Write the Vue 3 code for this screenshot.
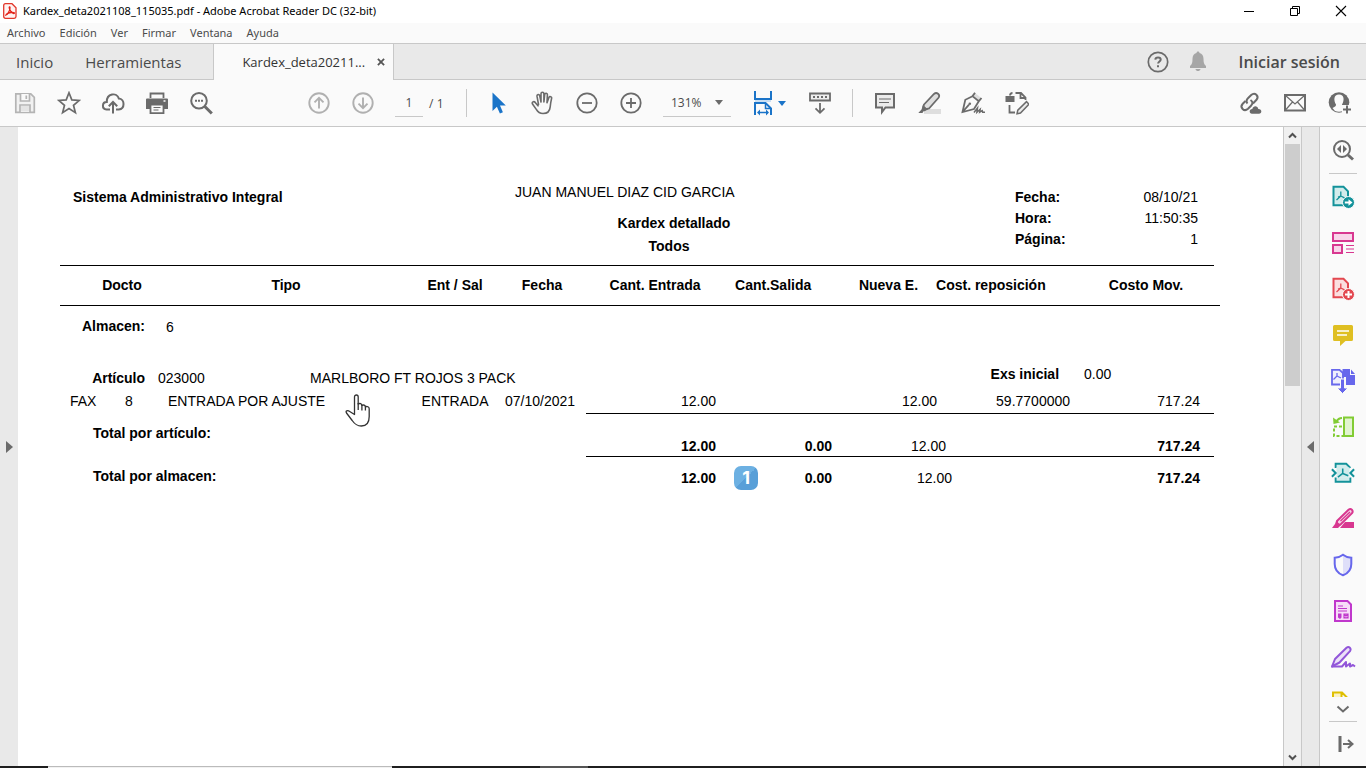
<script setup>
import { ref } from 'vue'

const page = ref('1')
const zoom = ref('131%')

const menus = ['Archivo', 'Edición', 'Ver', 'Firmar', 'Ventana', 'Ayuda']

const info = [
    { label: 'Fecha:', value: '08/10/21' },
    { label: 'Hora:', value: '11:50:35' },
    { label: 'Página:', value: '1' },
]

const movements = [
    { type: 'FAX', number: '8', name: 'ENTRADA POR AJUSTE', move: 'ENTRADA', date: '07/10/2021', input: '12.00', output: '', stock: '12.00', cost: '59.7700000', total: '717.24' },
]
</script>

<template>
    <div class="window">
        <header class="title_bar">
            <svg class="app_icon" width="14" height="16" viewBox="0 0 14 16">
                <path d="M2.500 .7h6.500l4 4v8.800q0 1.800-1.800 1.800H2.500Q.7 15.300.7 13.500v-11Q.7.7 2.500.7z" fill="#fff3f2" stroke="#e2372b" stroke-width="1.300" />
                <path d="M3 12c1.500-.6 4-4 4-7.300 0-1.400-1.100-1-.7.500.5 2.200 2.600 5 4.500 5.300 1.300 0 .4-1.400-1.700-1.200C6.800 9.500 4 10.500 3.200 11.500z" fill="none" stroke="#e2231a" stroke-width="1.300" />
            </svg>
            <span class="title">Kardex_deta2021108_115035.pdf - Adobe Acrobat Reader DC (32-bit)</span>
            <button class="win_btn" aria-label="Minimizar">
                <svg width="12" height="12" viewBox="0 0 12 12"><path d="M1 6.500h10" stroke="#000" /></svg>
            </button>
            <button class="win_btn" aria-label="Restaurar">
                <svg width="12" height="12" viewBox="0 0 12 12" fill="none" stroke="#000"><path d="M1.500 3.500h7v7h-7zM3.500 3.500v-2h7v7h-2" /></svg>
            </button>
            <button class="win_btn" aria-label="Cerrar">
                <svg width="12" height="12" viewBox="0 0 12 12" stroke="#000" stroke-width="1.100"><path d="M1 1l10 10M11 1L1 11" /></svg>
            </button>
        </header>

        <nav class="menu_bar">
            <button v-for="menu in menus" :key="menu">{{ menu }}</button>
        </nav>

        <div class="tabs">
            <button class="tab">Inicio</button>
            <button class="tab">Herramientas</button>
            <div class="tab_active">
                <span>Kardex_deta20211...</span>
                <button aria-label="Cerrar pestaña">
                    <svg width="8" height="8" viewBox="0 0 9 9" stroke="#555" stroke-width="2"><path d="M1 1l7 7M8 1L1 8" /></svg>
                </button>
            </div>
            <div class="session">
                <button aria-label="Ayuda">
                    <svg width="22" height="22" viewBox="0 0 22 22" fill="none" stroke="#6b6b6b">
                        <circle cx="11" cy="11" r="9.700" stroke-width="1.700" />
                        <path d="M8.300 8.600c.2-2.900 5.400-2.900 5.400 0 0 1.900-2.600 1.900-2.600 4" stroke-width="2" />
                        <path d="M11 14.200v2" stroke-width="2" />
                    </svg>
                </button>
                <button aria-label="Notificaciones">
                    <svg width="18" height="21" viewBox="0 0 18 21" fill="#a6a6a6">
                        <path d="M9 .5c1 0 1.500.6 1.500 1.600 2.700.8 4 2.900 4 5.700 0 4 .5 5.700 2.500 7.200v2H1v-2c2-1.500 2.500-3.200 2.500-7.200 0-2.800 1.300-4.900 4-5.700C7.500 1.100 8 .5 9 .5zM6.500 18h5c-.5 2.700-4.500 2.700-5 0z" />
                    </svg>
                </button>
                <button class="login">Iniciar sesión</button>
            </div>
        </div>

        <div class="toolbar">
            <div class="tools files">
                <button aria-label="Guardar">
                    <svg width="24" height="24" viewBox="0 0 24 24" fill="none" stroke="#b4b4b4" stroke-width="1.700">
                        <path d="M2.800 2.800h15l3.500 3.500v15H2.800z" fill="#f1f1f1" />
                        <path d="M7.500 3v7h9V3M13.300 4.500V8M7 21v-7h10v7" fill="#fafafa" />
                        <path d="M8 15h8v5.500H8z" fill="#e4e4e4" stroke="none" />
                    </svg>
                </button>
                <button aria-label="Favoritos">
                    <svg width="24" height="24" viewBox="0 0 24 24" fill="none" stroke="#6b6b6b" stroke-width="1.700">
                        <path d="M12 1.800l2.800 7.100 7.500.5-5.800 4.900 1.900 7.400-6.400-4.100-6.400 4.100 1.900-7.400L1.700 9.400l7.500-.5z" />
                    </svg>
                </button>
                <button aria-label="Subir a la nube">
                    <svg width="24" height="24" viewBox="0 0 24 24" fill="none" stroke="#6b6b6b" stroke-width="2">
                        <path d="M9 18.500H5.500c-5-.5-4.600-7.600.3-7.500C5.500 2.500 16 .8 17.800 7.600c6.300.4 6.300 10.300 0 10.900H15" />
                        <path d="M12 22.500V11.500M7.800 15.300L12 11l4.200 4.300" />
                    </svg>
                </button>
                <button aria-label="Imprimir">
                    <svg width="24" height="24" viewBox="0 0 24 24">
                        <path d="M5.500 7V2.500h13V7" fill="none" stroke="#6b6b6b" stroke-width="1.800" />
                        <path d="M2 7.500h20q1 0 1 1v9.500h-4v-4.500H5V18H1V8.500q0-1 1-1z" fill="#6b6b6b" />
                        <path d="M5.500 13.500h13v8.600h-13z" fill="#fafafa" stroke="#6b6b6b" stroke-width="1.800" />
                        <path d="M8.500 16.500h7M8.500 19h5" stroke="#6b6b6b" stroke-width="1.200" />
                        <path d="M18.500 10h2" stroke="#fff" stroke-width="1.500" />
                    </svg>
                </button>
                <button aria-label="Buscar">
                    <svg width="24" height="24" viewBox="0 0 24 24" fill="none" stroke="#6b6b6b">
                        <circle cx="10" cy="9.700" r="7.800" stroke-width="2" />
                        <path d="M15.800 15.500l7 7" stroke-width="3" />
                        <path d="M6 9.800h2M9 9.800h2M12 9.800h2" stroke-width="2" />
                    </svg>
                </button>
            </div>
            <div class="tools">
                <button aria-label="Página anterior">
                    <svg width="24" height="24" viewBox="0 0 24 24" fill="none" stroke="#b0b0b0" stroke-width="1.900">
                        <circle cx="12" cy="12" r="9.700" /><path d="M12 17.500V7M7.500 11.300L12 6.800l4.500 4.500" />
                    </svg>
                </button>
                <button aria-label="Página siguiente">
                    <svg width="24" height="24" viewBox="0 0 24 24" fill="none" stroke="#b0b0b0" stroke-width="1.900">
                        <circle cx="12" cy="12" r="9.700" /><path d="M12 6.500V17M7.500 12.700l4.500 4.500 4.500-4.500" />
                    </svg>
                </button>
            </div>
            <label class="page_box"><input v-model="page" type="text" aria-label="Página"> / 1</label>
            <span class="divider"></span>
            <div class="tools">
                <button aria-label="Seleccionar">
                    <svg width="24" height="24" viewBox="0 0 24 24"><path d="M5.500 1.500v18.500l4.400-4.300 3 6.800 3-1.300-2.900-6.700h5.800z" fill="#1b74c8" /></svg>
                </button>
                <button aria-label="Mano">
                    <svg width="24" height="24" viewBox="0 0 24 24" fill="none" stroke="#6b6b6b" stroke-width="1.600" stroke-linecap="round" stroke-linejoin="round">
                        <path d="M7.500 13.500L6 5.200c-.2-1.900 2.200-2.300 2.700-.5L10 11V2.800c0-2 2.900-2 2.900 0V11l.8-7.500c.3-1.800 2.800-1.500 2.700.3L16 11.800l1.900-5.300c.7-1.700 3.100-.9 2.700.9-.7 3-1.100 5.500-1.400 8.400-.4 4.500-2.600 6.700-7.200 6.700-3.600 0-5.300-1.600-6.700-4.100L1.500 13c-.9-1.800 1.300-3.200 2.700-1.600l2.800 3.400" />
                    </svg>
                </button>
                <button aria-label="Reducir">
                    <svg width="24" height="24" viewBox="0 0 24 24" fill="none" stroke="#6b6b6b" stroke-width="1.800">
                        <circle cx="12" cy="12" r="9.700" /><path d="M7 12h10" />
                    </svg>
                </button>
                <button aria-label="Ampliar">
                    <svg width="24" height="24" viewBox="0 0 24 24" fill="none" stroke="#6b6b6b" stroke-width="1.800">
                        <circle cx="12" cy="12" r="9.700" /><path d="M7 12h10M12 7v10" />
                    </svg>
                </button>
            </div>
            <label class="zoom_box">
                <select v-model="zoom" aria-label="Zoom">
                    <option>100%</option>
                    <option>131%</option>
                    <option>150%</option>
                </select>
                <svg width="8" height="5" viewBox="0 0 8 5"><path d="M0 0h8L4 5z" fill="#6b6b6b" /></svg>
            </label>
            <div class="tools">
                <button class="fit" aria-label="Ajustar ancho">
                    <svg width="20" height="26" viewBox="0 0 20 26" fill="none" stroke="#1b74c8" stroke-width="2">
                        <path d="M2 1v8h16V1" fill="#fafafa" />
                        <path d="M2 25V13h10.500L18 18.500V25" />
                        <path d="M12.500 13v5.500H18" stroke-width="1.500" />
                        <path d="M2 11h16" stroke="#c9dff3" />
                        <path d="M6 22.500h9" stroke-width="1.500" />
                        <path d="M7 19.500l-3 3 3 3zM13 19.500l3 3-3 3z" fill="#1b74c8" stroke="none" />
                    </svg>
                    <svg width="8" height="5" viewBox="0 0 8 5"><path d="M0 0h8L4 5z" fill="#1b74c8" /></svg>
                </button>
                <button aria-label="Mostrar barra">
                    <svg width="24" height="24" viewBox="0 0 24 24" fill="none" stroke="#6b6b6b" stroke-width="1.800">
                        <path d="M2 2.500h20v7H2z" fill="#eee" />
                        <path d="M5 6h2M9 6h2M13 6h2M17 6h2" />
                        <path d="M12 12v9.500M7.500 17.300l4.500 4.500 4.500-4.500" />
                    </svg>
                </button>
            </div>
            <span class="divider short"></span>
            <div class="tools">
                <button aria-label="Comentar">
                    <svg width="24" height="24" viewBox="0 0 24 24" fill="none" stroke="#6b6b6b">
                        <path d="M3 3h18v13.500h-8.500L9 21v-4.500H3z" fill="#ececec" stroke-width="2" />
                        <path d="M6 8h12M6 11.500h10" stroke-width="1.200" />
                    </svg>
                </button>
                <button aria-label="Resaltar">
                    <svg width="24" height="24" viewBox="0 0 24 24">
                        <path d="M7 18h17v5H7z" fill="#dedede" />
                        <path d="M7 13.500L17 3c2.700-2.500 6.600.7 4.500 3.800L12 17.500l-3.500.8-2.300-2z" fill="#dedede" stroke="#6b6b6b" stroke-width="1.800" />
                        <path d="M6 14l5 4.500-3.500 1.700H6.500L5.500 22H1.300l3.200-3.600z" fill="#6b6b6b" />
                    </svg>
                </button>
                <button aria-label="Firmar">
                    <svg width="24" height="24" viewBox="0 0 24 24" fill="none" stroke="#6b6b6b" stroke-width="1.800">
                        <path d="M14 2l7 5.500-2.500 3-6.500-6z" fill="#dedede" stroke="none" />
                        <path d="M14 1.800l-2.500 3.400 6.300 5L20.500 7M11.500 5.200L4.300 8.800 1.500 21l11.500-3 4.800-7.800M2 20.500l6-6.800" />
                        <circle cx="8.800" cy="12.700" r="1.300" fill="#6b6b6b" stroke="none" />
                        <path d="M13 21.500l3.500-4.500-.6 4.200 3.300-3-.5 3 2.500-1.500.5 1.500H24" stroke-width="1.500" />
                    </svg>
                </button>
                <button aria-label="Editar">
                    <svg width="24" height="24" viewBox="0 0 24 24" fill="none" stroke="#6b6b6b" stroke-width="1.800">
                        <path d="M5 4.500q0-2.500 2.500-2.500M10.500 2h5.500l4.500 4.500V9M15.500 2v5h5M4.500 14v7.500H10" />
                        <path d="M.5 5h9v6h-9z" fill="#6b6b6b" stroke="none" />
                        <path d="M12 22.800l.8-3.700 8.700-8.500 2.400 2.600-8.400 8.800z" fill="#ececec" stroke-width="1.500" />
                    </svg>
                </button>
            </div>
            <div class="tools share">
                <button aria-label="Compartir vínculo">
                    <svg width="24" height="24" viewBox="0 0 24 24" fill="none" stroke="#6b6b6b" stroke-width="2">
                        <path d="M9.500 12.500c-2-2.200-.8-4 .7-5.500l3-3c3.700-3.300 8.300 1 5.300 4.800L15 12.500" />
                        <path d="M12.500 9c2.700 1.700 2.300 4 .5 5.800l-3 3c-4 3.600-8.600-1.500-5.300-5L7.500 10" />
                        <path d="M14 22.700c-3.300-.2-3-4.700.3-4.700 1-3.800 5.500-3.300 6 0 3.800-.2 4 4.700.7 4.700z" fill="#6b6b6b" stroke="none" />
                    </svg>
                </button>
                <button aria-label="Correo">
                    <svg width="24" height="24" viewBox="0 0 24 24" fill="none" stroke="#6b6b6b">
                        <path d="M2 4h20v15.500H2z" stroke-width="2" />
                        <path d="M2.500 4.500L12 13l9.500-8.500M2.500 19l7-8M21.500 19l-7-8" stroke-width="1.200" />
                    </svg>
                </button>
                <button aria-label="Agregar persona">
                    <svg width="24" height="24" viewBox="0 0 24 24">
                        <circle cx="11" cy="11.500" r="10.300" fill="#6b6b6b" />
                        <path d="M11 3.500c5.500 0 5.500 6 3 10 0 1.500.5 2 3.500 3.500L15 20c-2.500 1-5.500 1-8 0l-2.500-3c3-1.500 3.500-2 3.500-3.500-2.500-4-2.500-10 3-10z" fill="#fafafa" />
                        <path d="M14 14h10v10H14z" fill="#fafafa" />
                        <path d="M19 14.500v8M15 18.500h8" stroke="#6b6b6b" stroke-width="2" />
                    </svg>
                </button>
            </div>
        </div>

        <main class="content">
            <button class="side_toggle left" aria-label="Mostrar panel izquierdo">
                <svg width="7" height="12" viewBox="0 0 7 12"><path d="M0 0l7 6-7 6z" fill="#6b6b6b" /></svg>
            </button>

            <article class="sheet">
                <div class="report_head">
                    <b class="system">Sistema Administrativo Integral</b>
                    <div class="report_title">
                        <p>JUAN MANUEL DIAZ CID GARCIA</p>
                        <h1>Kardex detallado</h1>
                        <h2>Todos</h2>
                    </div>
                    <dl>
                        <div v-for="item in info" :key="item.label">
                            <dt>{{ item.label }}</dt>
                            <dd>{{ item.value }}</dd>
                        </div>
                    </dl>
                </div>

                <table>
                    <colgroup>
                        <col class="w_type"><col class="w_number"><col class="w_code"><col class="w_name">
                        <col class="w_move"><col class="w_date"><col class="w_input"><col class="w_output">
                        <col class="w_stock"><col class="w_gap"><col class="w_cost"><col class="w_total"><col class="w_end">
                    </colgroup>
                    <thead>
                        <tr>
                            <th colspan="2" class="docto">Docto</th>
                            <th colspan="2" class="tipo">Tipo</th>
                            <th>Ent / Sal</th>
                            <th>Fecha</th>
                            <th>Cant. Entrada</th>
                            <th class="salida">Cant.Salida</th>
                            <th class="num">Nueva E.</th>
                            <th colspan="2" class="reposicion">Cost. reposición</th>
                            <th>Costo Mov.</th>
                            <td class="end"></td>
                        </tr>
                    </thead>
                    <tbody>
                        <tr class="almacen">
                            <th colspan="2" class="label">Almacen:</th>
                            <td colspan="11" class="store">6</td>
                        </tr>
                        <tr class="articulo">
                            <th colspan="2" class="label">Artículo</th>
                            <td>023000</td>
                            <td colspan="6">MARLBORO FT ROJOS 3 PACK</td>
                            <th colspan="2" class="initial">Exs inicial</th>
                            <td class="initial_value">0.00</td>
                            <td></td>
                        </tr>
                        <tr v-for="m in movements" :key="m.number" class="movement">
                            <td class="type">{{ m.type }}</td>
                            <td>{{ m.number }}</td>
                            <td colspan="2" class="wide">
                                {{ m.name }}
                                <svg class="hand" width="26" height="34" viewBox="0 0 26 34" fill="#fff" stroke="#333" stroke-width="1.300" stroke-linejoin="round">
                                    <path d="M9.500 20.500V3c0-2.700 3.700-2.700 3.700 0v7c1.600-1 3.700-.4 3.700 1.400 1.500-.9 3.500-.2 3.500 1.400 1.700-.8 3.800.1 3.800 2v7.700c0 5.700-2.700 9.500-7.800 9.500-4.900 0-7-2.200-9.200-5.500L1.500 19c-1-1.600.2-3 2-2.200z" />
                                    <path d="M13.200 9v7M16.900 11v5.500M20.400 12.500v4" />
                                </svg>
                            </td>
                            <td class="center">{{ m.move }}</td>
                            <td class="date">{{ m.date }}</td>
                            <td class="num">{{ m.input }}</td>
                            <td class="num">{{ m.output }}</td>
                            <td colspan="2" class="num stock">{{ m.stock }}</td>
                            <td class="num">{{ m.cost }}</td>
                            <td class="num total">{{ m.total }}</td>
                            <td></td>
                        </tr>
                        <tr class="sum by_item">
                            <th colspan="6">Total por artículo:</th>
                            <td class="num strong">12.00</td>
                            <td class="num strong">0.00</td>
                            <td colspan="2" class="num stock_item">12.00</td>
                            <td class="num"></td>
                            <td class="num strong total">717.24</td>
                            <td></td>
                        </tr>
                        <tr class="sum by_store">
                            <th colspan="6">Total por almacen:</th>
                            <td class="num strong">12.00</td>
                            <td class="num strong"><span class="badge">1</span>0.00</td>
                            <td colspan="2" class="num">12.00</td>
                            <td class="num"></td>
                            <td class="num strong total">717.24</td>
                            <td></td>
                        </tr>
                    </tbody>
                </table>
            </article>

            <div class="scrollbar">
                <button aria-label="Subir">
                    <svg width="9" height="7" viewBox="0 0 9 7" fill="none" stroke="#505050" stroke-width="2"><path d="M1 5.500L4.500 2 8 5.500" /></svg>
                </button>
                <div class="track"><div class="thumb"></div></div>
                <button aria-label="Bajar">
                    <svg width="9" height="7" viewBox="0 0 9 7" fill="none" stroke="#505050" stroke-width="2"><path d="M1 1.500L4.500 5 8 1.500" /></svg>
                </button>
            </div>

            <button class="side_toggle right" aria-label="Ocultar panel derecho">
                <svg width="7" height="12" viewBox="0 0 7 12"><path d="M7 0L0 6l7 6z" fill="#6b6b6b" /></svg>
            </button>

            <aside class="panel">
                <button aria-label="Buscar herramientas">
                    <svg width="24" height="24" viewBox="0 0 24 24" fill="none" stroke="#6b6b6b">
                        <circle cx="11" cy="11" r="8" stroke-width="2" />
                        <path d="M17 17l5 4.500" stroke-width="3" />
                        <path d="M10 7v8l-4-4zM12 7v8l4-4z" fill="#6b6b6b" stroke="none" />
                    </svg>
                </button>
                <hr>
                <div class="panel_list">
                    <button aria-label="Exportar PDF">
                        <svg width="24" height="24" viewBox="0 0 24 24" fill="none" stroke="#13929a">
                            <path d="M2.500 1.800h10L17 6.300v13.900H2.500z" fill="#d2ecec" stroke-width="2" />
                            <path d="M5.500 15l4.300-4V6.500M9.800 11l4.700 2.300M9.800 11L7 12" stroke-width="1.300" />
                            <circle cx="17.500" cy="17.500" r="6" fill="#13929a" stroke="#fafafa" />
                            <path d="M13.800 17.500h5" stroke="#fff" stroke-width="2" /><path d="M17.500 14.200l4 3.300-4 3.300z" fill="#fff" stroke="none" />
                        </svg>
                    </button>
                    <button aria-label="Organizar páginas">
                        <svg width="24" height="24" viewBox="0 0 24 24" fill="#f8d5ea" stroke="#d83790" stroke-width="2">
                            <path d="M2 2h20v8H2zM2 14h9v8H2z" />
                            <path d="M15 14.500h8M15 18h8M15 21.500h8" stroke-width="1.200" />
                        </svg>
                    </button>
                    <button aria-label="Crear PDF">
                        <svg width="24" height="24" viewBox="0 0 24 24" fill="none" stroke="#e34850">
                            <path d="M2.500 1.800h10L17 6.300v13.900H2.500z" fill="#fbdedf" stroke-width="2" />
                            <path d="M5.500 15l4.300-4V6.500M9.800 11l4.700 2.300M9.800 11L7 12" stroke-width="1.300" />
                            <circle cx="17.500" cy="17.500" r="6" fill="#e34850" stroke="#fafafa" />
                            <path d="M14 17.500h7M17.500 14v7" stroke="#fff" stroke-width="2" />
                        </svg>
                    </button>
                    <button aria-label="Comentar">
                        <svg width="24" height="24" viewBox="0 0 24 24">
                            <path d="M3.500 2h17q1.500 0 1.500 1.500v13q0 1.500-1.500 1.500h-6L9 23v-5H3.500Q2 18 2 16.500v-13Q2 2 3.500 2z" fill="#dfbf22" />
                            <path d="M6 8h12M6 12h10" stroke="#fff" stroke-width="1.500" />
                        </svg>
                    </button>
                    <button aria-label="Combinar archivos">
                        <svg width="26" height="26" viewBox="0 0 26 26" fill="none" stroke="#6767ec">
                            <path d="M2 1.800h7.500L13 5v11.500H2z" fill="#eeeefd" stroke-width="1.800" />
                            <path d="M3.500 11.500L7 8V5M7 8l4 2" stroke-width="1.300" />
                            <path d="M12.500 1H20v6h5v10h-9V9h-3.500zM21 1.500L25 6h-4z" fill="#6767ec" stroke="none" />
                            <path d="M10.500 11h4v9H18l-5.500 5.500L7 20h3.500z" fill="#6767ec" stroke="#fafafa" />
                        </svg>
                    </button>
                    <button aria-label="Comprimir páginas">
                        <svg width="24" height="24" viewBox="0 0 24 24" fill="none" stroke="#82cc34" stroke-width="2">
                            <path d="M13 2.500h9V21h-9z" fill="#e2f4d0" />
                            <path d="M11 11.500H3V21h9" stroke-dasharray="3 2" />
                            <path d="M11 3c-3 0-4.500 1.500-6 4" /><path d="M2 2.500L2.500 9 9 7.500z" fill="#82cc34" stroke="none" />
                        </svg>
                    </button>
                    <button aria-label="Optimizar PDF">
                        <svg width="24" height="24" viewBox="0 0 26 24" fill="none" stroke="#13929a">
                            <path d="M5 6.500V2h11.500L21 6.500M21 17v4.500H5V17" fill="#d2ecec" stroke-width="2" />
                            <path d="M6 6h14v11H6z" fill="#d2ecec" stroke="none" />
                            <path d="M7.500 16.500l5.200-4V7M12.700 12.500l6 2.500" stroke-width="1.700" />
                            <path d="M1 8l4 4-4 4M25 8l-4 4 4 4" stroke-width="2.200" />
                        </svg>
                    </button>
                    <button aria-label="Censurar">
                        <svg width="24" height="24" viewBox="0 0 24 24" fill="#d83790">
                            <path d="M14 15h9v6H9z" />
                            <path d="M6 14L17.500 2.800c2.500-2 5.300.8 3.500 3.400L9.500 17.500 6 18z" fill="#f5d5e7" stroke="#d83790" stroke-width="2" />
                            <path d="M9.500 14L19 5" stroke="#d83790" stroke-width="1.300" />
                            <path d="M5 14l5 4-3 3H1l3-4z" />
                        </svg>
                    </button>
                    <button aria-label="Proteger">
                        <svg width="24" height="24" viewBox="0 0 24 24">
                            <path d="M12 2v20c5-2 8.500-6.500 8.500-11V5C17 5 14 4 12 2z" fill="#dfdff9" />
                            <path d="M12 1.800c2.500 2 5 2.800 8.300 3V11c0 5.500-3.500 9.500-8.300 11.300C7.200 20.500 3.700 16.500 3.700 11V4.800C7 4.600 9.500 3.800 12 1.800z" fill="none" stroke="#6767ec" stroke-width="2" />
                        </svg>
                    </button>
                    <button aria-label="Preparar formulario">
                        <svg width="24" height="24" viewBox="0 0 24 24" fill="none" stroke="#c038cc">
                            <path d="M4 2h12.500L20 5.500V22H4z" fill="#f7dcf8" stroke-width="2" />
                            <path d="M7 7h5M7 9.500h9M7 12h9M13 15l4 4M17 15l-4 4M13 15h4v4h-4z" stroke-width="1.200" />
                            <path d="M7 14.500h3.500v4L9 20l-2-1.500z" fill="#c038cc" stroke="none" />
                        </svg>
                    </button>
                    <button aria-label="Rellenar y firmar">
                        <svg width="26" height="24" viewBox="0 0 26 24" fill="none" stroke="#9256d9" stroke-width="2" stroke-linejoin="round">
                            <path d="M2 21.500l3-7.500L16.500 2.700c2.500-2 5.200.8 3.500 3.400L9.500 17.500z" fill="#ece1f8" />
                            <path d="M1.500 21.500H12l4-4.500v4.500l4-3v3l3-1.500 2 1.500" />
                        </svg>
                    </button>
                    <button aria-label="Enviar para comentarios">
                        <svg width="24" height="24" viewBox="0 0 24 24" fill="#fbf2c4" stroke="#dfbf00" stroke-width="2">
                            <path d="M2 1.500h9l6 6V21H2zM10.500 1.500v7H17" />
                        </svg>
                    </button>
                </div>
                <button class="more" aria-label="Más">
                    <svg width="14" height="9" viewBox="0 0 14 9" fill="none" stroke="#6b6b6b" stroke-width="2"><path d="M1.500 1.500L7 6.500l5.500-5" /></svg>
                </button>
                <hr>
                <button class="expand" aria-label="Expandir panel">
                    <svg width="16" height="16" viewBox="0 0 16 16" fill="none" stroke="#6b6b6b" stroke-width="2"><path d="M2 0v16" stroke-width="3" /><path d="M5 8h9M10 4l4.500 4-4.500 4" /></svg>
                </button>
            </aside>
        </main>

        <footer class="taskbar"><span class="search"></span><span class="active_app"></span></footer>
    </div>
</template>

<style>
body {
    margin: 0;
    overflow: hidden;
}
</style>

<style scoped>
* {
    box-sizing: border-box;
}

.window {
    display: flex;
    flex-direction: column;
    height: 100vh;
    background-color: #fff;
    color: #4b4b4b;
    font-family: "Open Sans", "Noto Sans", sans-serif;
    font-size: 12px;
}

button {
    display: flex;
    align-items: center;
    justify-content: center;
    padding: 0;
    border: none;
    background: none;
    color: inherit;
    font: inherit;
    white-space: nowrap;
}

svg {
    display: block;
    flex: none;
}

.title_bar {
    display: flex;
    align-items: center;
    height: 23px;
    padding-bottom: 2px;
    color: #000;
    flex: none;
}

.app_icon {
    margin: 0 6px 0 3px;
}

.title {
    flex: 1;
    font-family: "Noto Sans", sans-serif;
    font-size: 11px;
}

.win_btn {
    width: 46px;
    height: 20px;
}

.win_btn:last-child {
    margin-right: 2px;
}

.menu_bar {
    display: flex;
    gap: 14px;
    height: 20px;
    padding: 0 0 2px 7px;
    background-color: #fafafa;
    font-family: "Noto Sans", sans-serif;
    font-size: 11px;
    flex: none;
}

.tabs {
    display: flex;
    height: 37px;
    background-color: #e9e9e9;
    border-top: 1px solid #c8c8c8;
    border-bottom: 1px solid #c8c8c8;
    font-size: 15px;
    flex: none;
}

.tab {
    padding: 0 16px;
}

.tab + .tab {
    padding-right: 32px;
}

.tab_active {
    display: flex;
    align-items: center;
    justify-content: space-between;
    width: 181px;
    margin-bottom: -1px;
    padding: 0 8px 0 28px;
    background-color: #fafafa;
    border-left: 1px solid #c8c8c8;
    border-right: 1px solid #c8c8c8;
    font-size: 13px;
    color: #333;
}

.session {
    display: flex;
    align-items: center;
    gap: 20px;
    margin-left: auto;
    padding-right: 26px;
}

.login {
    margin-left: 12px;
    font-size: 16px;
    font-weight: 600;
}

.toolbar {
    display: flex;
    align-items: center;
    height: 47px;
    padding: 0 4px 0 3px;
    background-color: #fafafa;
    border-bottom: 1px solid #c8c8c8;
    flex: none;
}

.tools {
    display: flex;
}

.tools button {
    width: 44px;
    height: 44px;
}

.files {
    margin-right: 74px;
}

.tools .fit {
    gap: 5px;
    width: 57px;
}

.page_box {
    display: flex;
    align-items: center;
    gap: 3px;
    width: 71px;
    margin-left: 10px;
    white-space: pre;
}

.page_box input {
    width: 28px;
    height: 28px;
    padding: 0;
    border: none;
    border-bottom: 1px solid #c8c8c8;
    background: none;
    color: inherit;
    font: inherit;
    text-align: center;
}

.divider {
    width: 1px;
    height: 28px;
    margin-right: 10px;
    background-color: #c8c8c8;
}

.zoom_box {
    display: flex;
    align-items: center;
    width: 68px;
    height: 28px;
    margin: 0 10px;
    padding: 0 8px;
    border-bottom: 1px solid #c8c8c8;
}

.zoom_box select {
    flex: 1;
    min-width: 0;
    padding: 0;
    border: none;
    background: none;
    color: inherit;
    font: inherit;
    appearance: none;
}

.short {
    margin: 0 10px;
}

.share {
    gap: 1px;
    margin-left: auto;
}

.content {
    display: flex;
    flex: 1;
    min-height: 0;
}

.side_toggle {
    width: 18px;
    background-color: #e9e9e9;
    flex: none;
}

.side_toggle.right {
    border-left: 1px solid #c8c8c8;
}

.sheet {
    flex: 1;
    min-width: 0;
    padding: 55px 63px 0 42px;
    overflow: hidden;
    background-color: #fff;
    color: #000;
    font-family: "Liberation Sans", Arial, sans-serif;
    font-size: 14px;
    line-height: 20px;
}

.report_head {
    display: grid;
    grid-template-columns: 442px 1fr 199px;
    margin-right: 6px;
    padding: 0 0 9px 13px;
    border-bottom: 1px solid #000;
}

.system {
    padding-top: 5px;
}

.report_title {
    width: 318px;
    text-align: center;
}

.report_title p {
    margin: 0 0 11px;
    text-align: left;
}

.report_title h1,
.report_title h2 {
    margin: 0;
    font-size: 14px;
}

.report_title h2 {
    margin-top: 3px;
    padding-right: 10px;
}

.report_head dl {
    display: flex;
    flex-direction: column;
    gap: 1px;
    margin: 0;
    padding: 5px 16px 0 0;
}

.report_head dl div {
    display: flex;
    justify-content: space-between;
}

.report_head dt {
    font-weight: bold;
}

.report_head dd {
    margin: 0;
}

table {
    width: 100%;
    border-collapse: separate;
    border-spacing: 0;
    table-layout: fixed;
}

.w_type { width: 57px; }
.w_number { width: 33px; }
.w_code { width: 152px; }
.w_name { width: 110px; }
.w_move { width: 86px; }
.w_date { width: 88px; }
.w_input { width: 138px; }
.w_output { width: 116px; }
.w_stock { width: 86px; }
.w_gap { width: 34px; }
.w_cost { width: 118px; }
.w_total { width: 136px; }
.w_end { width: 6px; }

th,
td {
    padding: 0 8px;
    text-align: left;
    white-space: nowrap;
}

thead th,
thead td {
    height: 40px;
    padding: 0 0 2px;
    border-bottom: 1px solid #000;
    text-align: center;
}

thead .docto {
    padding-left: 34px;
}

thead .tipo {
    padding-left: 10px;
}

thead .salida {
    padding-left: 11px;
    text-align: left;
}

thead .reposicion {
    padding-left: 10px;
    text-align: left;
}

.num,
thead .num {
    padding-right: 8px;
    text-align: right;
}

.label {
    padding-right: 5px;
    text-align: right;
}

.center {
    padding: 0;
    text-align: center;
}

.date {
    padding-left: 7px;
}

.wide {
    position: relative;
    padding-left: 18px;
}

.store {
    padding-left: 16px;
}

.total {
    padding-right: 14px;
}

.strong {
    font-weight: bold;
}

.almacen > * {
    height: 41px;
}

.almacen .label {
    padding-bottom: 2px;
}

.articulo > * {
    height: 43px;
    padding-bottom: 2px;
    vertical-align: bottom;
}

.articulo .initial {
    padding: 0 19px 6px 0;
    text-align: right;
}

.articulo .initial_value {
    padding: 0 0 6px 6px;
}

.movement > * {
    height: 23px;
    padding-bottom: 2px;
}

.movement .type {
    padding-left: 10px;
}

.movement .stock {
    padding-right: 23px;
}

.sum > th {
    padding-left: 33px;
    vertical-align: top;
}

.sum .num {
    border-top: 1px solid #000;
}

.by_item > * {
    height: 43px;
    vertical-align: bottom;
}

.by_item > th {
    padding-top: 10px;
}

.by_item .stock_item {
    padding-right: 14px;
}

.by_store > * {
    padding-top: 11px;
}

.by_store > th {
    padding-top: 10px;
}

.by_store .num {
    position: relative;
}

.hand {
    position: absolute;
    top: 4px;
    left: 195px;
}

.badge {
    position: absolute;
    top: 9px;
    left: 10px;
    width: 24px;
    height: 24px;
    border-radius: 7px;
    background: linear-gradient(135deg, #6cb0e2 50%, #589fd8 50%);
    color: #fff;
    font-family: Inter, sans-serif;
    font-size: 18px;
    font-weight: 700;
    line-height: 24px;
    text-align: center;
}

.scrollbar {
    display: flex;
    flex-direction: column;
    width: 18px;
    border-left: 1px solid #c8c8c8;
    background-color: #f0f0f0;
    flex: none;
}

.scrollbar button {
    height: 17px;
}

.track {
    flex: 1;
    padding: 0 1px;
}

.thumb {
    height: 40%;
    background-color: #cdcdcd;
}

.panel {
    display: flex;
    flex-direction: column;
    width: 47px;
    border-left: 1px solid #c8c8c8;
    background-color: #fafafa;
    flex: none;
}

.panel button {
    width: 46px;
    height: 46px;
    flex: none;
}

.panel hr {
    width: 28px;
    height: 1px;
    margin: 0 auto;
    border: none;
    background-color: #c8c8c8;
    flex: none;
}

.panel_list {
    flex: 1;
    min-height: 0;
    overflow: hidden;
}

.panel .more {
    height: 24px;
}

.panel .expand {
    height: 44px;
    padding-left: 6px;
}

.taskbar {
    display: flex;
    gap: 148px;
    height: 2px;
    padding-left: 48px;
    background-color: #1f1f1f;
    flex: none;
}

.search {
    width: 344px;
    background-color: #f2f2f2;
    border-top: 1px solid #bbb;
}

.active_app {
    width: 48px;
    background-color: #555;
}
</style>
